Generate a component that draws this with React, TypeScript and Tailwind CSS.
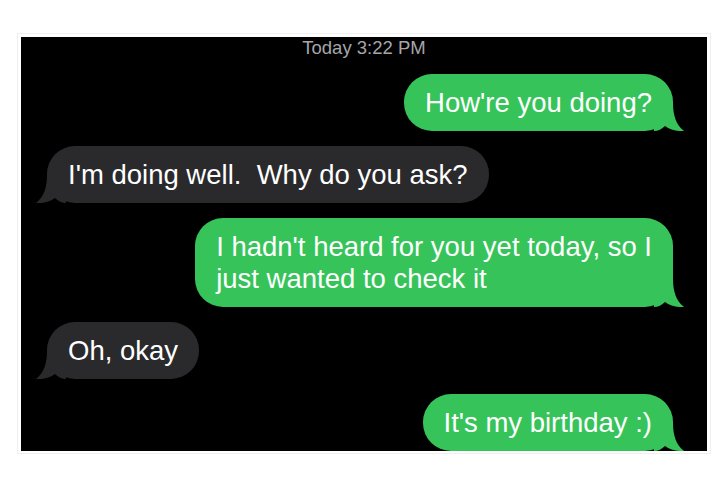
import React from "react";

type Msg = { from: "me" | "them"; lines: string[] };

const messages: Msg[] = [
  { from: "me", lines: ["How're you doing?"] },
  { from: "them", lines: ["I'm doing well.  Why do you ask?"] },
  { from: "me", lines: ["I hadn't heard for you yet today, so I", "just wanted to check it"] },
  { from: "them", lines: ["Oh, okay"] },
  { from: "me", lines: ["It's my birthday :)"] },
];

function Tail({ mine }: { mine: boolean }) {
  return (
    <svg
      width="30"
      height="28"
      viewBox="0 0 30 28"
      className={mine ? "absolute right-[-11px] bottom-0" : "absolute left-[-11px] bottom-0 -scale-x-100"}
    >
      <path
        d="M0 0 H19 C19 12 22 22 30 28 C24 28.5 16 27 11 23 C8 26 4 28 0 28 Z"
        fill={mine ? "#36c45a" : "#2a2a2c"}
      />
    </svg>
  );
}

function Bubble({ msg }: { msg: Msg }) {
  const mine = msg.from === "me";
  return (
    <div className={`flex ${mine ? "justify-end pr-[34px]" : "justify-start pl-[26px]"}`}>
      <div
        className={`relative rounded-[28px] px-[21px] py-[12.5px] text-[27.5px] leading-[32px] text-white whitespace-pre ${
          mine ? "bg-[#36c45a]" : "bg-[#2a2a2c]"
        }`}
      >
        <Tail mine={mine} />
        <span className="relative">
          {msg.lines.map((l, i) => (
            <span key={i} className="block">
              {l}
            </span>
          ))}
        </span>
      </div>
    </div>
  );
}

export default function App() {
  return (
    <div
      className="w-[728px] h-[485px] bg-white pt-[33px] pl-[17px]"
      style={{ fontFamily: '"Liberation Sans", Arial, sans-serif' }}
    >
      <div className="w-[694px] h-[421px] border border-[#efefef] p-[3px]">
        <div className="w-[686px] h-[414px] bg-black overflow-hidden flex flex-col gap-[15px]">
          <div className="text-center text-[18.5px] leading-[22px] text-[#a6a6aa]">Today 3:22 PM</div>
          {messages.map((m, i) => (
            <Bubble key={i} msg={m} />
          ))}
        </div>
      </div>
    </div>
  );
}
